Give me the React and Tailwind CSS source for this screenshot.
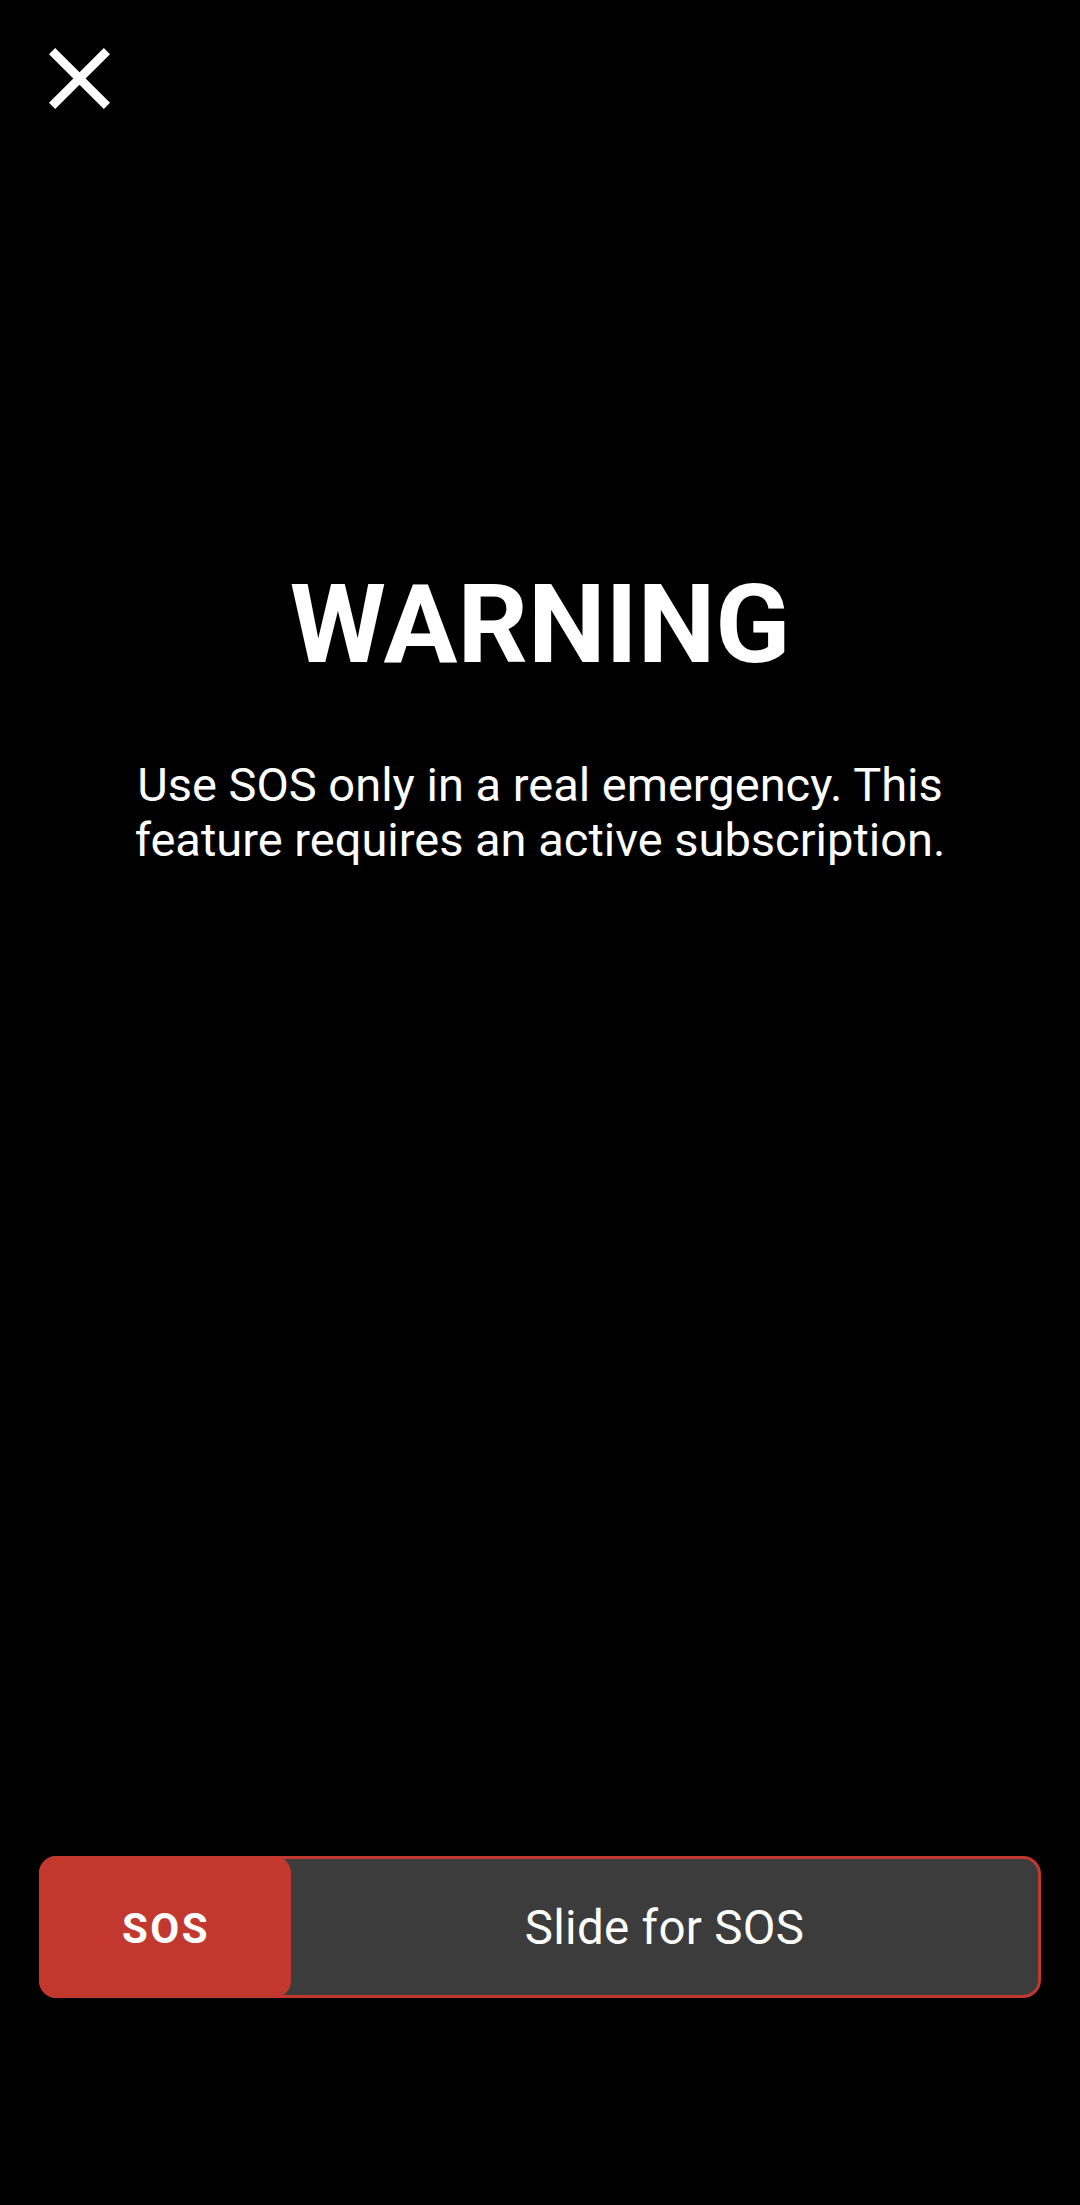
import React from "react";

function CloseIcon() {
  return (
    <svg viewBox="5 5 14 14" className="w-[61px] h-[61px] block" fill="#ffffff">
      <path d="M19 6.41L17.59 5 12 10.59 6.41 5 5 6.41 10.59 12 5 17.59 6.41 19 12 13.41 17.59 19 19 17.59 13.41 12z" />
    </svg>
  );
}

function SlideToSos() {
  return (
    <div className="relative mx-[39px] h-[142px] rounded-[18px] border-[3px] border-[#c2382e] bg-[#3c3c3c]">
      {/* draggable knob */}
      <div className="absolute -left-[3px] -top-[3px] -bottom-[3px] w-[252px] pt-[4px] rounded-[17px] bg-[#c2382e] flex items-center justify-center">
        <span className="text-white font-bold text-[42px] leading-none tracking-[2.5px] pl-[2px]">SOS</span>
      </div>
      <div className="h-full pl-[249px] pt-[4px] flex items-center justify-center">
        <span className="text-white text-[47.5px] leading-none tracking-[0.3px]">Slide for SOS</span>
      </div>
    </div>
  );
}

export default function App() {
  return (
    <div
      className="min-h-[2205px] bg-black flex flex-col text-white"
      style={{ fontFamily: "Roboto, 'Noto Sans', sans-serif" }}
    >
      <div className="pt-[48px] pl-[49px]">
        <button type="button" aria-label="Close" className="block">
          <CloseIcon />
        </button>
      </div>

      <h1 className="mt-[461px] text-center font-bold text-[110px] leading-none">WARNING</h1>

      <p className="mt-[77px] mx-auto w-[880px] text-center text-[47px] leading-[55px]">
        Use SOS only in a real emergency. This feature requires an active subscription.
      </p>

      <div className="flex-1" />

      <SlideToSos />

      <div className="h-[207px]" />
    </div>
  );
}
